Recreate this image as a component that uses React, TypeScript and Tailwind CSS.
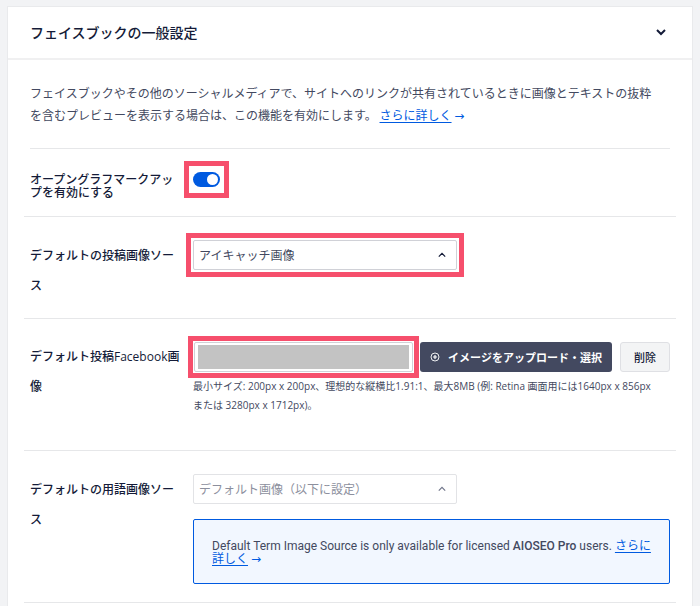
import React, { useState } from "react";

const ChevronIcon: React.FC<{ className?: string; strokeWidth?: number }> = ({
  className = "",
  strokeWidth = 1.5,
}) => (
  <svg
    viewBox="0 0 10 10"
    fill="none"
    stroke="currentColor"
    strokeWidth={strokeWidth}
    className={`w-[10px] h-[10px] ${className}`}
    aria-hidden="true"
  >
    <path d="M1 3 L5 7 L9 3" />
  </svg>
);

const CirclePlusIcon: React.FC = () => (
  <svg
    viewBox="0 0 10 10"
    fill="none"
    stroke="currentColor"
    className="w-[10px] h-[10px]"
    aria-hidden="true"
  >
    <circle cx="5" cy="5" r="4" strokeWidth="0.9" />
    <path d="M5 3 V7 M3 5 H7" strokeWidth="1.2" />
  </svg>
);

interface SelectFieldProps {
  id: string;
  options: string[];
  disabled?: boolean;
  highlighted?: boolean;
}

const SelectField: React.FC<SelectFieldProps> = ({
  id,
  options,
  disabled,
  highlighted,
}) => (
  <div
    className={`relative self-start w-full max-w-[264px] ${
      highlighted ? "outline-5 outline-offset-2 outline-[#f64f6c]" : ""
    }`}
  >
    <select
      id={id}
      disabled={disabled}
      className={`block w-full h-[30px] px-[5px] appearance-none bg-white border rounded-xs text-xs opacity-100 ${
        disabled
          ? "border-[#e2e3e6] text-[#8c8f9d]"
          : "border-[#d0d1d7] text-[#434960]"
      }`}
    >
      {options.map((option) => (
        <option key={option}>{option}</option>
      ))}
    </select>
    <ChevronIcon
      className={`absolute right-[10px] top-[10px] rotate-180 pointer-events-none p-px ${
        disabled ? "text-[#70758a]" : "text-[#141b38]"
      }`}
    />
  </div>
);

const MoreLink: React.FC = () => (
  <>
    <a href="#more" className="text-[#005ae0] underline underline-offset-2">
      さらに詳しく
    </a>{" "}
    <a
      href="#more"
      className="text-[#005ae0] font-['DejaVu_Sans',sans-serif]"
      aria-label="さらに詳しく"
    >
      →
    </a>
  </>
);

const rowClass =
  "mx-4 px-[6px] border-b border-[#e6e7e9] grid grid-cols-[150px_minmax(0,1fr)] gap-x-[13px]";
const labelClass = "block text-xs font-medium leading-[30px] text-[#141b38]";

const App: React.FC = () => {
  const [isOpen, setIsOpen] = useState(true);
  const [enabled, setEnabled] = useState(true);
  const [imageUrl, setImageUrl] = useState("");

  return (
    <div className="min-h-screen flex flex-col bg-[#f2f3f5] px-[7px] pt-[6px] text-[#434960] font-['Noto_Sans_CJK_JP',sans-serif]">
      <section className="flex-1 bg-white border border-b-0 border-[#e9eaec]">
        {/* Card header */}
        <h2 className="border-b-2 border-[#f0f0f1]">
          <button
            type="button"
            aria-expanded={isOpen}
            onClick={() => setIsOpen(!isOpen)}
            className="w-full h-[51px] pl-[22px] pr-[26px] pb-[2px] flex items-center justify-between text-sm font-medium text-[#141b38]"
          >
            フェイスブックの一般設定
            <ChevronIcon strokeWidth={2} className={isOpen ? "" : "-rotate-90"} />
          </button>
        </h2>

        {isOpen && (
          <div>
            <p className="mx-[22px] pr-2 pt-[22px] pb-[21px] border-b border-[#e6e7e9] text-xs leading-[22px]">
              フェイスブックやその他のソーシャルメディアで、サイトへのリンクが共有されているときに画像とテキストの抜粋を含むプレビューを表示する場合は、この機能を有効にします。{" "}
              <MoreLink />
            </p>

            {/* Open Graph toggle */}
            <div className={`${rowClass} pt-[23px] pb-[18px]`}>
              <label
                htmlFor="openGraph"
                className="text-xs font-medium leading-[13px] text-[#141b38]"
              >
                オープングラフマークアップを有効にする
              </label>
              <div className="relative w-[27px] h-[15px]">
                <input
                  id="openGraph"
                  type="checkbox"
                  role="switch"
                  checked={enabled}
                  onChange={(e) => setEnabled(e.target.checked)}
                  className="peer block w-full h-full appearance-none rounded-full bg-[#8c8f9a] checked:bg-[#005ae0]"
                />
                <span className="absolute top-[2px] left-[2px] w-[11px] h-[11px] rounded-full bg-white pointer-events-none peer-checked:left-[14px]" />
                <span className="absolute -inset-x-[9px] -inset-y-[11px] border-5 border-[#f64f6c] pointer-events-none" />
              </div>
            </div>

            {/* Default post image source */}
            <div className={`${rowClass} pt-[23px] pb-[18px]`}>
              <label htmlFor="postSource" className={labelClass}>
                デフォルトの投稿画像ソース
              </label>
              <SelectField
                id="postSource"
                highlighted
                options={["アイキャッチ画像", "デフォルト画像（以下に設定）"]}
              />
            </div>

            {/* Default post Facebook image */}
            <div className={`${rowClass} pt-[23px] pb-[35px]`}>
              <label
                htmlFor="postImage"
                className={`${labelClass} font-['Open_Sans','Noto_Sans_CJK_JP',sans-serif]`}
              >
                デフォルト投稿Facebook画像
              </label>
              <div>
                <div className="flex">
                  <div className="ml-px flex-1 min-w-0 outline-5 outline-offset-1 outline-[#f64f6c]">
                    <div className="h-[30px] py-[2px] px-[3px] border border-[#d0d1d7] rounded-xs">
                      <input
                        id="postImage"
                        type="text"
                        value={imageUrl}
                        onChange={(e) => setImageUrl(e.target.value)}
                        className="block w-full h-full px-1 bg-[#c3c3c3] text-xs outline-none"
                      />
                    </div>
                  </div>
                  <button
                    type="button"
                    className="ml-[7px] w-[192px] h-[30px] flex items-center justify-center gap-2 rounded-[3px] bg-[#434960] text-white text-[11px] font-bold whitespace-nowrap"
                  >
                    <CirclePlusIcon />
                    イメージをアップロード・選択
                  </button>
                  <button
                    type="button"
                    onClick={() => setImageUrl("")}
                    className="ml-2 w-[50px] h-[30px] rounded-[3px] border border-[#dfe0e4] bg-[#f3f4f5] text-[11px] font-medium text-[#141b38]"
                  >
                    削除
                  </button>
                </div>
                <p className="mt-[5px] pr-4 text-[10px] leading-[19px] font-['Open_Sans','Noto_Sans_CJK_JP',sans-serif]">
                  最小サイズ: 200px x 200px、理想的な縦横比1.91:1、最大8MB (例: Retina
                  画面用には1640px x 856px または 3280px x 1712px)。
                </p>
              </div>
            </div>

            {/* Default term image source */}
            <div className={`${rowClass} pt-[23px] pb-[18px]`}>
              <label htmlFor="termSource" className={labelClass}>
                デフォルトの用語画像ソース
              </label>
              <div>
                <SelectField
                  id="termSource"
                  disabled
                  options={["デフォルト画像（以下に設定）"]}
                />
                <div className="mt-[15px] pl-[18px] pr-4 pt-5 pb-[17px] border border-[#005ae0] rounded-xs bg-[#f2f7ff] text-xs leading-[13px] font-['Roboto','Noto_Sans_CJK_JP',sans-serif]">
                  Default Term Image Source is only available for licensed{" "}
                  <strong className="font-medium">AIOSEO Pro</strong> users.{" "}
                  <MoreLink />
                </div>
              </div>
            </div>
          </div>
        )}
      </section>
    </div>
  );
};

export default App;
